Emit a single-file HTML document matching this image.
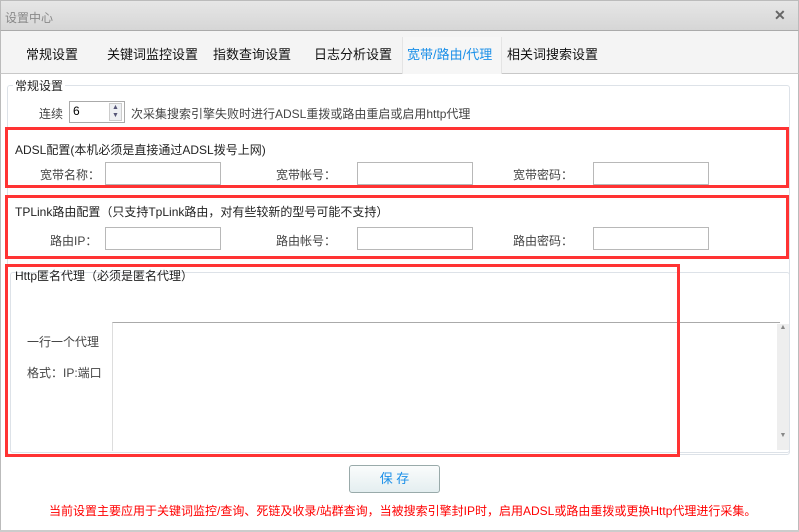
<!DOCTYPE html><html><head><meta charset="utf-8"><style>
*{box-sizing:border-box;margin:0;padding:0}
body{width:799px;height:532px;overflow:hidden;background:#fff;font-family:"Liberation Sans","Noto Sans CJK SC",sans-serif;font-size:12px;color:#333;position:relative}
.a{position:absolute;white-space:nowrap}
.title{left:0;top:0;width:799px;height:31px;background:linear-gradient(#e6e6e6,#d6d6d6);border:1px solid #bbb;border-bottom:1px solid #aaa}
.tabs{left:0;top:31px;width:799px;height:43px;background:#f4f4f4;border-bottom:1px solid #c8c8c8;border-left:1px solid #bbb;border-right:1px solid #bbb}
.tab{top:44px;font-size:13px;color:#111}
.inp{border:1px solid #b8b8b8;height:23px;width:116px;background:#fff}
.red{border:3px solid #f33}
.fs{border:1px solid #dde2e8;border-radius:3px}
.lb{color:#444}
</style></head><body>
<div class="a title"></div>
<div class="a" style="left:5px;top:9px;color:#888;font-size:12px">设置中心</div>
<div class="a" style="left:774px;top:7px;font-size:14px;color:#666;font-weight:bold">✕</div>
<div class="a tabs"></div>
<div class="a" style="left:402px;top:37px;width:100px;height:37px;background:#f6f6f6;border-left:1px solid #e4e4e4;border-right:1px solid #e4e4e4"></div>
<div class="a tab" style="left:26px">常规设置</div>
<div class="a tab" style="left:107px">关键词监控设置</div>
<div class="a tab" style="left:213px">指数查询设置</div>
<div class="a tab" style="left:314px">日志分析设置</div>
<div class="a tab" style="left:407px;color:#1a8fe8">宽带/路由/代理</div>
<div class="a tab" style="left:507px">相关词搜索设置</div>
<div class="a" style="left:0;top:74px;width:1px;height:458px;background:#bbb"></div>
<div class="a" style="left:798px;top:74px;width:1px;height:458px;background:#bbb"></div>
<div class="a" style="left:0;top:530px;width:799px;height:2px;background:#ccc"></div>
<div class="a fs" style="left:7px;top:85px;width:783px;height:370px"></div>
<div class="a" style="left:13px;top:77px;background:#fff;padding:0 2px;font-size:12px;color:#222">常规设置</div>
<div class="a lb" style="left:39px;top:105px">连续</div>
<div class="a" style="left:69px;top:101px;width:56px;height:22px;border:1px solid #aaa;background:#fff;padding:2px 3px;color:#000">6</div>
<div class="a" style="left:109px;top:103px;width:13px;height:18px;background:#eef0f3;border:1px solid #ccc;font-size:7px;color:#557;text-align:center;line-height:8px">▲<br>▼</div>
<div class="a lb" style="left:131px;top:105px">次采集搜索引擎失败时进行ADSL重拨或路由重启或启用http代理</div>
<div class="a red" style="left:5px;top:127px;width:784px;height:61px"></div>
<div class="a" style="left:15px;top:141px;color:#222">ADSL配置(本机必须是直接通过ADSL拨号上网)</div>
<div class="a lb" style="left:40px;top:166px">宽带名称：</div><div class="a inp" style="left:105px;top:162px"></div>
<div class="a lb" style="left:276px;top:166px">宽带帐号：</div><div class="a inp" style="left:357px;top:162px"></div>
<div class="a lb" style="left:513px;top:166px">宽带密码：</div><div class="a inp" style="left:593px;top:162px"></div>
<div class="a red" style="left:5px;top:195px;width:784px;height:64px"></div>
<div class="a" style="left:15px;top:203px;color:#222">TPLink路由配置（只支持TpLink路由，对有些较新的型号可能不支持）</div>
<div class="a lb" style="left:50px;top:232px">路由IP：</div><div class="a inp" style="left:105px;top:227px"></div>
<div class="a lb" style="left:276px;top:232px">路由帐号：</div><div class="a inp" style="left:357px;top:227px"></div>
<div class="a lb" style="left:513px;top:232px">路由密码：</div><div class="a inp" style="left:593px;top:227px"></div>
<div class="a fs" style="left:10px;top:272px;width:780px;height:181px"></div>
<div class="a" style="left:112px;top:322px;width:668px;height:129px;border-top:1px solid #aaa;border-left:1px solid #ddd;background:#fff"></div>
<div class="a" style="left:777px;top:324px;width:12px;height:126px;background:#eee;font-size:7px;color:#888;text-align:center">▲<div style="margin-top:101px">▼</div></div>
<div class="a red" style="left:5px;top:264px;width:675px;height:193px"></div>
<div class="a" style="left:15px;top:267px;color:#222">Http匿名代理（必须是匿名代理）</div>
<div class="a lb" style="left:27px;top:333px">一行一个代理</div>
<div class="a lb" style="left:27px;top:364px">格式：IP:端口</div>
<div class="a" style="left:349px;top:465px;width:91px;height:28px;border:1px solid #9aa;border-radius:3px;background:linear-gradient(#fafcfc,#e4eef0);color:#1a8fe8;text-align:center;line-height:26px;font-size:13px">保 存</div>
<div class="a" style="left:49px;top:502px;color:#f00">当前设置主要应用于关键词监控/查询、死链及收录/站群查询，当被搜索引擎封IP时，启用ADSL或路由重拨或更换Http代理进行采集。</div>
</body></html>
